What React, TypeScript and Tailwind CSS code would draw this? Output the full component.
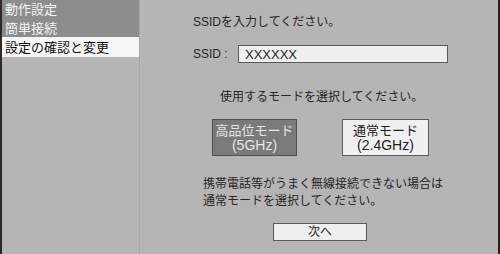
import React from 'react';

const menuItems = [
  { label: '動作設定', active: false, h: 'h-[19px]' },
  { label: '簡単接続', active: false, h: 'h-[18px]' },
  { label: '設定の確認と変更', active: true, h: 'h-[20px]' },
];

const App: React.FC = () => {
  return (
    <div className="w-[500px] h-[254px] flex bg-[#b5b5b5] text-[#262626] font-['Liberation_Sans','Noto_Sans_CJK_JP',sans-serif] overflow-hidden">
      {/* left frame */}
      <div className="w-[2px] bg-[#2e2828]"></div>

      {/* menu */}
      <div className="w-[137px] flex flex-col">
        {menuItems.map((item) => (
          <div
            key={item.label}
            className={`${item.h} flex items-center pl-[3px] text-[13px] leading-none ${item.active ? 'bg-[#f6f6f6] text-[#111]' : 'bg-[#8d8d8d] text-[#f4f4f4]'}`}
          >
            {item.label}
          </div>
        ))}
      </div>
      <div className="w-px bg-[#a9a9a9]"></div>

      {/* main */}
      <div className="flex-1 flex flex-col text-[12px]">
        <p className="mt-[14px] ml-[53px] leading-[16px]">SSIDを入力してください。</p>

        <div className="mt-[15px] ml-[53px] flex items-center h-[18px]">
          <span className="w-[45px] leading-none">SSID :</span>
          <div className="w-[210px] h-[18px] border border-[#5a5a5a] bg-[#efefef] flex items-center pl-[6px] text-[13px] leading-none">
            XXXXXX
          </div>
        </div>

        <p className="mt-[26px] ml-[80px] leading-[16px]">使用するモードを選択してください。</p>

        <div className="mt-[14px] ml-[72px] flex gap-[45px] text-[13px]">
          <div className="w-[85px] h-[37px] border border-[#4e4e4e] bg-[#7a7a7a] text-[#e6e6e6] flex flex-col items-center justify-center">
            <span className="leading-[14px]">高品位モード</span>
            <span className="leading-[14px] text-[14px]">(5GHz)</span>
          </div>
          <div className="w-[87px] h-[37px] border border-[#5a5a5a] bg-[#f0f0f0] text-[#222] flex flex-col items-center justify-center">
            <span className="leading-[14px]">通常モード</span>
            <span className="leading-[14px] text-[14px]">(2.4GHz)</span>
          </div>
        </div>

        <p className="mt-[20px] ml-[63px] leading-[17px]">
          携帯電話等がうまく無線接続できない場合は
          <br />
          通常モードを選択してください。
        </p>

        <div className="mt-[13px] ml-[133px] w-[94px] h-[18px] border border-[#5a5a5a] bg-[#efefef] flex items-center justify-center leading-none">
          次へ
        </div>
      </div>

      {/* right frame */}
      <div className="w-[2px] bg-[#262222]"></div>
    </div>
  );
};

export default App;
